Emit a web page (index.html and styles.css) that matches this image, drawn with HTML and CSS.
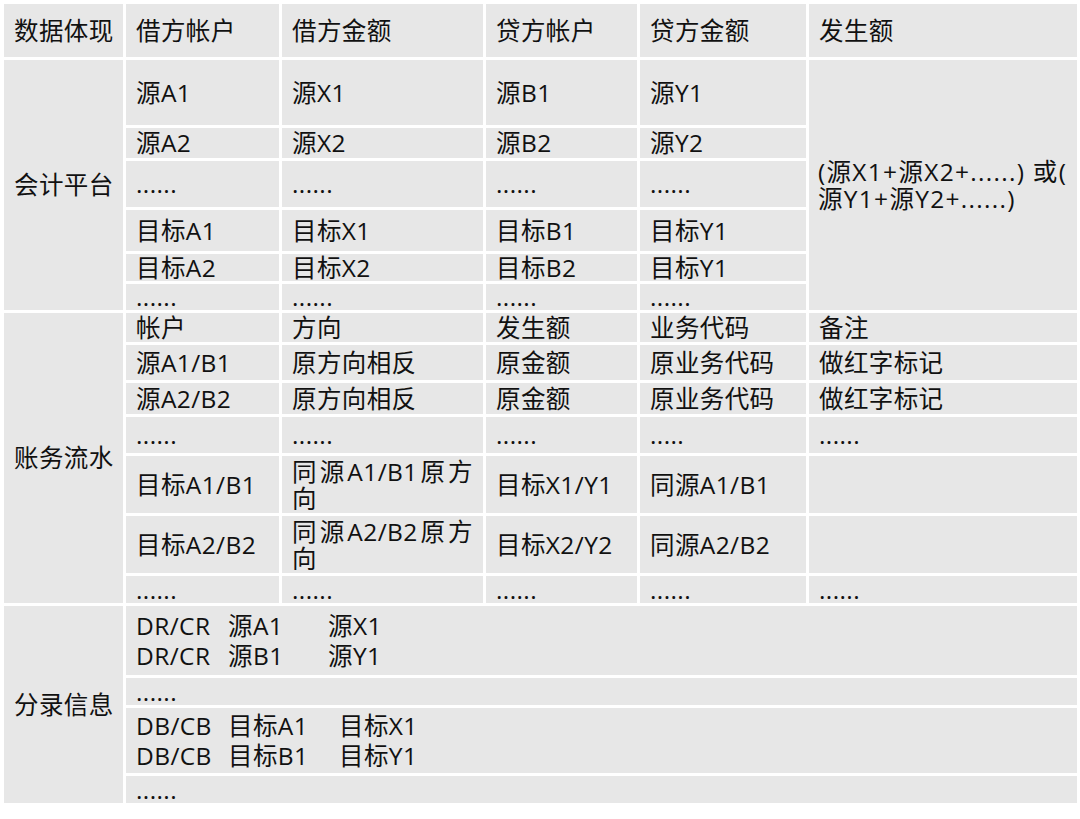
FILE: index.html
```html
<!DOCTYPE html>
<html lang="zh-CN">
<head>
<meta charset="utf-8">
<title>数据体现</title>
<link rel="stylesheet" href="styles.css">
</head>
<body>
<table class="grid">
  <colgroup>
    <col class="c1"><col class="c2"><col class="c3"><col class="c4"><col class="c5"><col class="c6">
  </colgroup>
  <tbody>
    <tr class="hd">
      <td>数据体现</td><td>借方帐户</td><td>借方金额</td><td>贷方帐户</td><td>贷方金额</td><td>发生额</td>
    </tr>

    <tr class="s1a">
      <td rowspan="6" class="lab">会计平台</td>
      <td>源A1</td><td>源X1</td><td>源B1</td><td>源Y1</td>
      <td rowspan="6" class="sum"><span class="blk">(源X1+源X2+......) 或(</span><span class="blk">源Y1+源Y2+......)</span></td>
    </tr>
    <tr class="s1b"><td>源A2</td><td>源X2</td><td>源B2</td><td>源Y2</td></tr>
    <tr class="s1c"><td>......</td><td>......</td><td>......</td><td>......</td></tr>
    <tr class="s1d"><td>目标A1</td><td>目标X1</td><td>目标B1</td><td>目标Y1</td></tr>
    <tr class="s1e"><td>目标A2</td><td>目标X2</td><td>目标B2</td><td>目标Y1</td></tr>
    <tr class="s1f"><td>......</td><td>......</td><td>......</td><td>......</td></tr>

    <tr class="s2a">
      <td rowspan="7" class="lab">账务流水</td>
      <td>帐户</td><td>方向</td><td>发生额</td><td>业务代码</td><td>备注</td>
    </tr>
    <tr class="s2b"><td>源A1/B1</td><td>原方向相反</td><td>原金额</td><td>原业务代码</td><td>做红字标记</td></tr>
    <tr class="s2c"><td>源A2/B2</td><td>原方向相反</td><td>原金额</td><td>原业务代码</td><td>做红字标记</td></tr>
    <tr class="s2d"><td>......</td><td>......</td><td>......</td><td>.....</td><td>......</td></tr>
    <tr class="s2e"><td>目标A1/B1</td><td class="wrap">同源A1/B1原方向</td><td>目标X1/Y1</td><td>同源A1/B1</td><td></td></tr>
    <tr class="s2f"><td>目标A2/B2</td><td class="wrap">同源A2/B2原方向</td><td>目标X2/Y2</td><td>同源A2/B2</td><td></td></tr>
    <tr class="s2g"><td>......</td><td>......</td><td>......</td><td>......</td><td>......</td></tr>

    <tr class="s3a">
      <td rowspan="4" class="lab">分录信息</td>
      <td colspan="5" class="entry">
        <div><span class="k">DR/CR</span><span class="a">源A1</span><span>源X1</span></div>
        <div><span class="k">DR/CR</span><span class="a">源B1</span><span>源Y1</span></div>
      </td>
    </tr>
    <tr class="s3b"><td colspan="5">......</td></tr>
    <tr class="s3c">
      <td colspan="5" class="entry">
        <div><span class="k">DB/CB</span><span class="t">目标A1</span><span>目标X1</span></div>
        <div><span class="k">DB/CB</span><span class="t">目标B1</span><span>目标Y1</span></div>
      </td>
    </tr>
    <tr class="s3d"><td colspan="5">......</td></tr>
  </tbody>
</table>
</body>
</html>
```

FILE: styles.css
```css
html, body {
  margin: 0;
  padding: 0;
  background: #ffffff;
}

body {
  padding: 1px;
  font-family: "Open Sans", "Noto Sans CJK SC", sans-serif;
  font-size: 24.5px;
  letter-spacing: 0.4px;
  color: #111111;
}

.grid {
  table-layout: fixed;
  width: 1079px;
  border-collapse: separate;
  border-spacing: 3px;
  margin: 0;
}

.c1 { width: 119px; }
.c2 { width: 153px; }
.c3 { width: 201px; }
.c4 { width: 151px; }
.c5 { width: 166px; }
.c6 { width: 268px; }

.grid td {
  background: #e7e7e7;
  padding: 0 10px;
  line-height: 26px;
  vertical-align: middle;
  white-space: nowrap;
}

.grid td.wrap {
  white-space: normal;
  text-align: justify;
  line-height: 27px;
}

.grid td.sum {
  line-height: 27px;
  padding: 0 8px 0 9px;
  letter-spacing: 1.3px;
}

.blk {
  display: block;
}

.grid td.entry {
  line-height: 30px;
}

.entry .k {
  display: inline-block;
  width: 92px;
}

.entry .a {
  display: inline-block;
  width: 100px;
}

.entry .t {
  display: inline-block;
  width: 111px;
}

.hd { height: 53px; }

.s1a { height: 65px; }
.s1b { height: 30px; }
.s1c { height: 46px; }
.s1d { height: 41px; }
.s1e { height: 27px; }
.s1f { height: 26px; }

.s2a { height: 29px; }
.s2b { height: 35px; }
.s2c { height: 31px; }
.s2d { height: 36px; }
.s2e { height: 57px; }
.s2f { height: 57px; }
.s2g { height: 27px; }

.s3a { height: 69px; }
.s3b { height: 27px; }
.s3c { height: 65px; }
.s3d { height: 27px; }
```
